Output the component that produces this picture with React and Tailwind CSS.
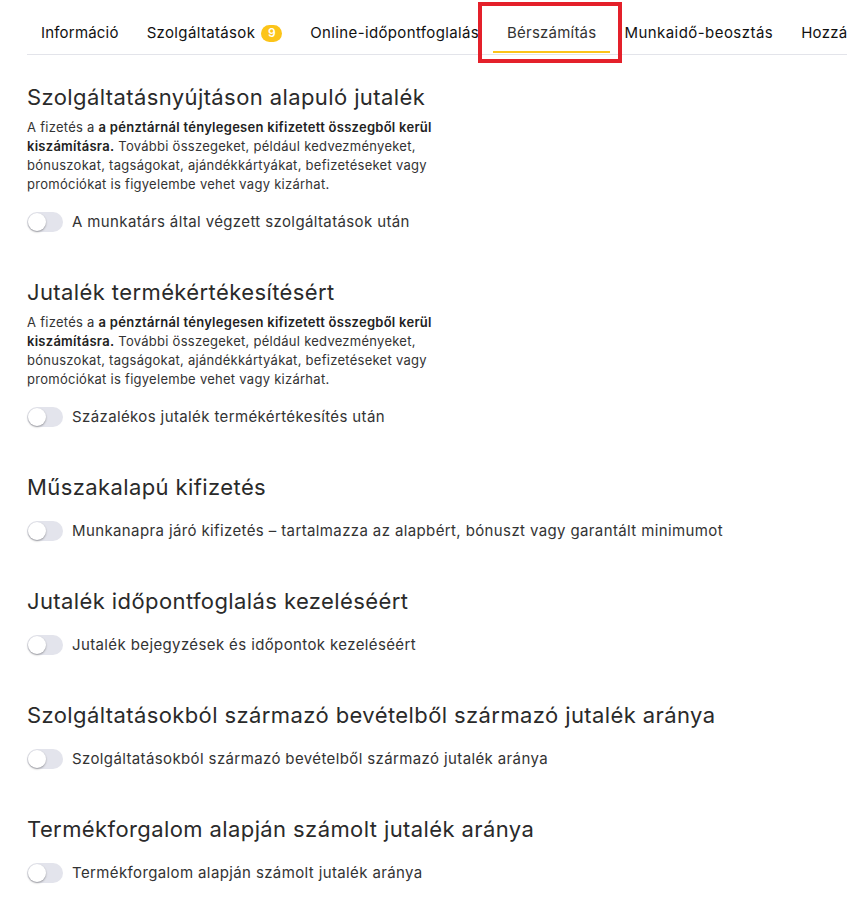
import React from "react";

const tabs = [
  { label: "Információ", tr: "tracking-[0.2px]" },
  { label: "Szolgáltatások", badge: "9", tr: "tracking-[0.35px]" },
  { label: "Online-időpontfoglalás", tr: "tracking-[0.36px]" },
  { label: "Bérszámítás", active: true, tr: "tracking-[0.22px]" },
  { label: "Munkaidő-beosztás", tr: "tracking-[0.45px]" },
  { label: "Hozzáférés", tr: "tracking-[0.3px]" },
];

function Toggle() {
  return (
    <div className="relative h-[20px] w-[36px] shrink-0 rounded-full bg-[#e3e4ec]">
      <div className="absolute left-[1px] top-[1px] h-[18px] w-[18px] rounded-full bg-white shadow-[0_1px_2px_rgba(0,0,0,0.35)]" />
    </div>
  );
}

function Desc() {
  return (
    <p className="mt-[7px] max-w-[420px] text-[13px] leading-[19px] tracking-[0.27px] text-[#333]">
      A fizetés a{" "}
      <span className="font-semibold text-[#222]">
        a pénztárnál ténylegesen kifizetett összegből kerül kiszámításra.
      </span>{" "}
      További összegeket, például kedvezményeket, bónuszokat, tagságokat,
      ajándékkártyákat, befizetéseket vagy promóciókat is figyelembe vehet vagy
      kizárhat.
    </p>
  );
}

function Section({ title, label, desc }) {
  return (
    <section className="mb-[44px]">
      <h2 className="text-[22px] leading-[28px] font-normal tracking-[0.4px] text-[#2a2a2a]">{title}</h2>
      {desc && <Desc />}
      <div className={`flex items-center gap-[9px] ${desc ? "mt-[16px]" : "mt-[18px]"} h-[24px]`}>
        <Toggle />
        <span className="text-[15px] tracking-[0.38px] text-[#333]">{label}</span>
      </div>
    </section>
  );
}

export default function App() {
  return (
    <div
      className="w-[847px] h-[901px] overflow-hidden bg-white"
      style={{ fontFamily: "Inter, 'Noto Sans', sans-serif" }}
    >
      <div className="relative pl-[27px]">
        <div className="flex border-b border-[#e3e4ea] whitespace-nowrap">
          {tabs.map((t) => (
            <div
              key={t.label}
              className={`relative flex shrink-0 items-center gap-[6px] px-[14px] pt-[22px] pb-[10px] text-[15px] leading-[22px] ${t.tr} ${
                t.active ? "text-[#333]" : "text-[#111]"
              }`}
            >
              <span>{t.label}</span>
              {t.badge && (
                <span className="flex h-[17px] w-[21px] items-center justify-center rounded-full bg-[#fcc419] text-[12px] font-semibold tracking-normal text-white">
                  {t.badge}
                </span>
              )}
              {t.active && (
                <span className="absolute bottom-[1px] left-0 right-0 h-[2px] bg-[#fcc419]" />
              )}
            </div>
          ))}
        </div>
        <div className="pointer-events-none absolute left-[478px] top-[2px] h-[61px] w-[144px] border-[4px] border-[#e4202a]" />
      </div>

      <div className="pl-[27px] pt-[28px]">
        <Section
          title="Szolgáltatásnyújtáson alapuló jutalék"
          desc
          label="A munkatárs által végzett szolgáltatások után"
        />
        <Section
          title="Jutalék termékértékesítésért"
          desc
          label="Százalékos jutalék termékértékesítés után"
        />
        <Section
          title="Műszakalapú kifizetés"
          label="Munkanapra járó kifizetés – tartalmazza az alapbért, bónuszt vagy garantált minimumot"
        />
        <Section
          title="Jutalék időpontfoglalás kezeléséért"
          label="Jutalék bejegyzések és időpontok kezeléséért"
        />
        <Section
          title="Szolgáltatásokból származó bevételből származó jutalék aránya"
          label="Szolgáltatásokból származó bevételből származó jutalék aránya"
        />
        <Section
          title="Termékforgalom alapján számolt jutalék aránya"
          label="Termékforgalom alapján számolt jutalék aránya"
        />
      </div>
    </div>
  );
}
